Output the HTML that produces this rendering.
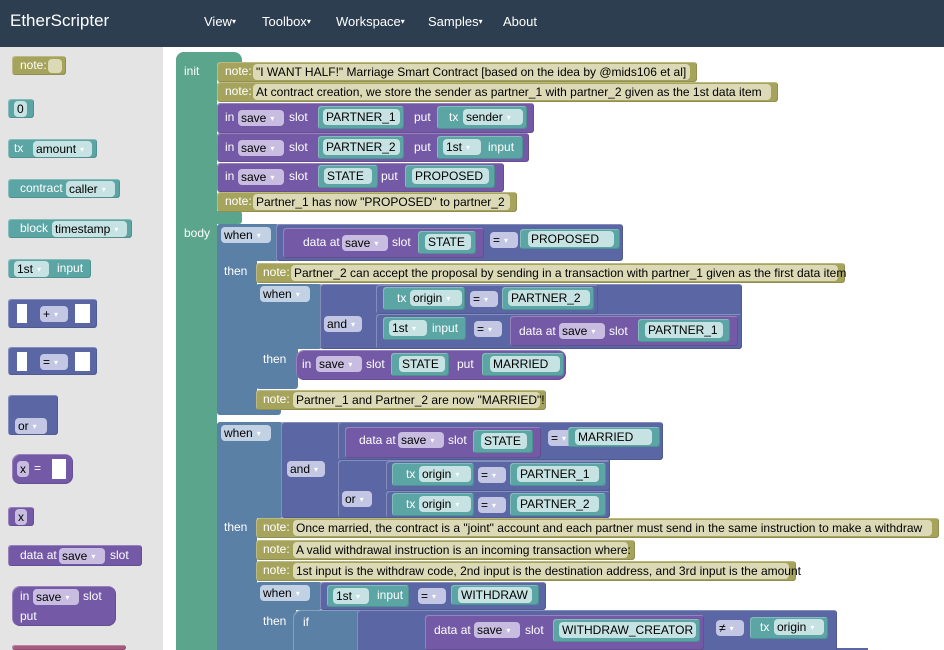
<!DOCTYPE html>
<html style="width:944px;height:650px;overflow:hidden"><head><meta charset="utf-8"><style>
*{margin:0;padding:0;box-sizing:border-box}
body{width:944px;height:650px;overflow:hidden;background:#fff;position:relative;font-family:"Liberation Sans",Arial,sans-serif}
.b{position:absolute;border-radius:3px;box-shadow:inset 1px 1px 0 rgba(255,255,255,.25),inset -1px -1px 0 rgba(0,0,0,.12)}
.t{position:absolute;color:#fff;font-size:12px;line-height:15px;white-space:nowrap}
.f{position:absolute;height:16px;line-height:16px;border-radius:4px;color:#000;font-size:12px;padding:0 3px;white-space:nowrap}
.f i{font-style:normal;font-size:8px;color:#fff;margin-left:4px;vertical-align:1px}
.o{background:#a5a35c}.of{background:#dcdab6}
.p{background:#7459a6}.pf{background:#c8bde0}
.c{background:#5ba5a5}.cf{background:#c6e2e2}
.l{background:#5b67a5}.lf{background:#c3c7e4}
.w{background:#5b80a5}.wf{background:#c3d1e4}
.g{background:#5ba58c}
.s{position:absolute;background:#fff}
.nav{position:absolute;top:14px;color:#fff;font-size:13px}
.nav i{font-style:normal;font-size:8px;vertical-align:2px}
</style></head><body>
<div style="position:absolute;left:0;top:0;width:944px;height:47px;background:#2c3e50"></div>
<div style="position:absolute;left:10px;top:11px;color:#fff;font-size:17px">EtherScripter</div>
<div class="nav" style="left:204px">View<i>▾</i></div>
<div class="nav" style="left:262px">Toolbox<i>▾</i></div>
<div class="nav" style="left:336px">Workspace<i>▾</i></div>
<div class="nav" style="left:428px">Samples<i>▾</i></div>
<div class="nav" style="left:503px">About</div>
<div style="position:absolute;left:0;top:47px;width:163px;height:603px;background:#e4e4e4"></div>

<!-- toolbox -->
<div class="b o" style="left:12px;top:56px;width:54px;height:19px"></div><div class="t" style="left:20px;top:58px">note:</div><div class="f of" style="left:48px;top:59px;width:14px;height:14px"></div>
<div class="b c" style="left:8px;top:99px;width:26px;height:19px"></div><div class="f cf" style="left:14px;top:101px">0</div>
<div class="b c" style="left:8px;top:139px;width:89px;height:19px"></div><div class="t" style="left:14px;top:141px">tx</div><div class="f cf" style="left:33px;top:141px;width:59px">amount<i>▾</i></div>
<div class="b c" style="left:8px;top:179px;width:112px;height:19px"></div><div class="t" style="left:20px;top:181px">contract</div><div class="f cf" style="left:66px;top:181px;width:49px">caller<i>▾</i></div>
<div class="b c" style="left:8px;top:219px;width:124px;height:19px"></div><div class="t" style="left:20px;top:221px">block</div><div class="f cf" style="left:52px;top:221px;width:75px">timestamp<i>▾</i></div>
<div class="b c" style="left:8px;top:259px;width:83px;height:19px"></div><div class="f cf" style="left:14px;top:261px;width:35px">1st<i>▾</i></div><div class="t" style="left:57px;top:261px">input</div>
<div class="b l" style="left:8px;top:299px;width:89px;height:29px"></div><div class="s" style="left:17px;top:304px;width:10px;height:19px"></div><div class="s" style="left:75px;top:304px;width:15px;height:19px"></div><div class="f lf" style="left:40px;top:306px;width:28px">+<i>▾</i></div>
<div class="b l" style="left:8px;top:347px;width:89px;height:28px"></div><div class="s" style="left:17px;top:352px;width:10px;height:19px"></div><div class="s" style="left:75px;top:352px;width:15px;height:19px"></div><div class="f lf" style="left:40px;top:354px;width:28px">=<i>▾</i></div>
<div class="b l" style="left:8px;top:395px;width:50px;height:40px"></div><div class="f lf" style="left:15px;top:418px;width:32px">or<i>▾</i></div>
<div class="b p" style="left:12px;top:454px;width:61px;height:30px;border-radius:8px"></div><div class="f pf" style="left:17px;top:461px">x</div><div class="t" style="left:34px;top:461px">=</div><div class="s" style="left:52px;top:459px;width:14px;height:20px"></div>
<div class="b p" style="left:8px;top:507px;width:26px;height:19px"></div><div class="f pf" style="left:15px;top:509px">x</div>
<div class="b p" style="left:8px;top:545px;width:134px;height:21px"></div><div class="t" style="left:20px;top:548px">data at</div><div class="f pf" style="left:59px;top:548px;width:46px">save<i>▾</i></div><div class="t" style="left:110px;top:548px">slot</div>
<div class="b p" style="left:12px;top:586px;width:104px;height:40px;border-radius:8px"></div><div class="t" style="left:20px;top:589px">in</div><div class="f pf" style="left:33px;top:589px;width:46px">save<i>▾</i></div><div class="t" style="left:83px;top:589px">slot</div><div class="t" style="left:20px;top:609px">put</div>
<div class="b" style="left:12px;top:645px;width:114px;height:5px;background:#a55b80"></div>

<!-- workspace teal -->
<div class="b g" style="left:176px;top:52px;width:66px;height:12px;border-radius:8px 8px 0 0;box-shadow:none"></div>
<div class="b g" style="left:176px;top:52px;width:41px;height:598px;border-radius:8px 0 0 0;box-shadow:none"></div>
<div class="b g" style="left:176px;top:211px;width:66px;height:13px;box-shadow:none"></div>
<div class="t" style="left:184px;top:64px">init</div>
<div class="t" style="left:184px;top:226px">body</div>

<!-- init -->
<div class="b o" style="left:217px;top:62px;width:480px;height:20px"></div><div class="t" style="left:225px;top:64px">note:</div><div class="f of" style="left:253px;top:64px;width:437px">"I WANT HALF!" Marriage Smart Contract [based on the idea by @mids106 et al]</div>
<div class="b o" style="left:217px;top:82px;width:561px;height:20px"></div><div class="t" style="left:225px;top:84px">note:</div><div class="f of" style="left:253px;top:84px;width:518px">At contract creation, we store the sender as partner_1 with partner_2 given as the 1st data item</div>

<div class="b p" style="left:217px;top:103px;width:317px;height:30px"></div><div class="t" style="left:225px;top:110px">in</div><div class="f pf" style="left:238px;top:110px;width:46px">save<i>▾</i></div><div class="t" style="left:289px;top:110px">slot</div>
<div class="b c" style="left:318px;top:106px;width:86px;height:23px"></div><div class="f cf" style="left:323px;top:109px;width:77px">PARTNER_1</div><div class="t" style="left:414px;top:110px">put</div>
<div class="b c" style="left:437px;top:106px;width:90px;height:23px"></div><div class="t" style="left:449px;top:110px">tx</div><div class="f cf" style="left:463px;top:109px;width:60px">sender<i>▾</i></div>

<div class="b p" style="left:217px;top:133px;width:312px;height:29px"></div><div class="t" style="left:225px;top:140px">in</div><div class="f pf" style="left:238px;top:140px;width:46px">save<i>▾</i></div><div class="t" style="left:289px;top:140px">slot</div>
<div class="b c" style="left:318px;top:136px;width:86px;height:23px"></div><div class="f cf" style="left:323px;top:139px;width:77px">PARTNER_2</div><div class="t" style="left:414px;top:140px">put</div>
<div class="b c" style="left:437px;top:136px;width:86px;height:23px"></div><div class="f cf" style="left:443px;top:139px;width:38px">1st<i>▾</i></div><div class="t" style="left:488px;top:140px">input</div>

<div class="b p" style="left:217px;top:163px;width:287px;height:29px"></div><div class="t" style="left:225px;top:169px">in</div><div class="f pf" style="left:238px;top:169px;width:46px">save<i>▾</i></div><div class="t" style="left:289px;top:169px">slot</div>
<div class="b c" style="left:318px;top:165px;width:60px;height:23px"></div><div class="f cf" style="left:324px;top:168px;width:48px">STATE</div><div class="t" style="left:381px;top:169px">put</div>
<div class="b c" style="left:405px;top:165px;width:90px;height:23px"></div><div class="f cf" style="left:412px;top:168px;width:77px">PROPOSED</div>

<div class="b o" style="left:217px;top:192px;width:300px;height:20px"></div><div class="t" style="left:225px;top:194px">note:</div><div class="f of" style="left:253px;top:194px;width:257px">Partner_1 has now "PROPOSED" to partner_2</div>

<!-- body when 1 -->
<div class="b w" style="left:217px;top:224px;width:40px;height:191px;box-shadow:none"></div>
<div class="b w" style="left:217px;top:224px;width:62px;height:37px;box-shadow:none"></div>
<div class="b w" style="left:217px;top:404px;width:64px;height:11px;box-shadow:none"></div>
<div class="f wf" style="left:221px;top:227px;width:50px">when<i>▾</i></div>
<div class="b l" style="left:276px;top:224px;width:347px;height:37px"></div>
<div class="b p" style="left:283px;top:228px;width:201px;height:30px"></div><div class="t" style="left:303px;top:235px">data at</div><div class="f pf" style="left:342px;top:235px;width:46px">save<i>▾</i></div><div class="t" style="left:392px;top:235px">slot</div>
<div class="b c" style="left:418px;top:231px;width:58px;height:23px"></div><div class="f cf" style="left:425px;top:234px;width:46px">STATE</div>
<div class="f lf" style="left:490px;top:232px;width:28px">=<i>▾</i></div>
<div class="b c" style="left:520px;top:229px;width:100px;height:20px"></div><div class="f cf" style="left:528px;top:231px;width:86px">PROPOSED</div>
<div class="t" style="left:224px;top:264px">then</div>
<div class="b o" style="left:256px;top:263px;width:589px;height:20px"></div><div class="t" style="left:263px;top:265px">note:</div><div class="f of" style="left:291px;top:265px;width:547px"> Partner_2 can accept the proposal by sending in a transaction with partner_1 given as the first data item</div>

<div class="b w" style="left:256px;top:284px;width:42px;height:105px;box-shadow:none"></div>
<div class="b w" style="left:256px;top:284px;width:66px;height:65px;box-shadow:none"></div>
<div class="f wf" style="left:260px;top:286px;width:50px">when<i>▾</i></div>
<div class="b l" style="left:320px;top:284px;width:422px;height:65px"></div>
<div class="f lf" style="left:324px;top:316px;width:38px">and<i>▾</i></div>
<div class="b l" style="left:376px;top:285px;width:222px;height:29px"></div>
<div class="b c" style="left:383px;top:287px;width:82px;height:23px"></div><div class="t" style="left:397px;top:291px">tx</div><div class="f cf" style="left:410px;top:290px;width:52px">origin<i>▾</i></div>
<div class="f lf" style="left:470px;top:291px;width:28px">=<i>▾</i></div>
<div class="b c" style="left:502px;top:287px;width:92px;height:23px"></div><div class="f cf" style="left:508px;top:290px;width:82px">PARTNER_2</div>
<div class="b l" style="left:376px;top:314px;width:366px;height:35px"></div>
<div class="b c" style="left:383px;top:317px;width:83px;height:23px"></div><div class="f cf" style="left:389px;top:320px;width:38px">1st<i>▾</i></div><div class="t" style="left:432px;top:321px">input</div>
<div class="f lf" style="left:474px;top:321px;width:28px">=<i>▾</i></div>
<div class="b p" style="left:510px;top:316px;width:228px;height:30px"></div><div class="t" style="left:519px;top:324px">data at</div><div class="f pf" style="left:559px;top:323px;width:46px">save<i>▾</i></div><div class="t" style="left:609px;top:324px">slot</div>
<div class="b c" style="left:638px;top:319px;width:92px;height:23px"></div><div class="f cf" style="left:645px;top:322px;width:78px">PARTNER_1</div>
<div class="t" style="left:263px;top:352px">then</div>
<div class="b p" style="left:296px;top:350px;width:270px;height:30px;border-radius:8px"></div><div class="t" style="left:302px;top:357px">in</div><div class="f pf" style="left:316px;top:356px;width:46px">save<i>▾</i></div><div class="t" style="left:366px;top:357px">slot</div>
<div class="b c" style="left:391px;top:353px;width:58px;height:23px"></div><div class="f cf" style="left:399px;top:356px;width:46px">STATE</div><div class="t" style="left:457px;top:357px">put</div>
<div class="b c" style="left:482px;top:353px;width:82px;height:23px"></div><div class="f cf" style="left:490px;top:356px;width:70px">MARRIED</div>
<div class="b o" style="left:256px;top:390px;width:290px;height:20px"></div><div class="t" style="left:263px;top:392px">note:</div><div class="f of" style="left:293px;top:392px;width:247px">Partner_1 and Partner_2 are now "MARRIED"!</div>

<!-- body when 2 -->
<div class="b w" style="left:217px;top:422px;width:40px;height:240px;box-shadow:none"></div>
<div class="b w" style="left:217px;top:422px;width:66px;height:96px;box-shadow:none"></div>
<div class="f wf" style="left:221px;top:425px;width:50px">when<i>▾</i></div>
<div class="b l" style="left:281px;top:422px;width:329px;height:96px"></div>
<div class="b l" style="left:338px;top:422px;width:325px;height:38px"></div>
<div class="b p" style="left:345px;top:427px;width:196px;height:31px"></div><div class="t" style="left:359px;top:433px">data at</div><div class="f pf" style="left:398px;top:432px;width:46px">save<i>▾</i></div><div class="t" style="left:448px;top:433px">slot</div>
<div class="b c" style="left:473px;top:430px;width:60px;height:23px"></div><div class="f cf" style="left:481px;top:433px;width:46px">STATE</div>
<div class="f lf" style="left:548px;top:430px;width:28px">=<i>▾</i></div>
<div class="b c" style="left:568px;top:427px;width:92px;height:20px"></div><div class="f cf" style="left:575px;top:429px;width:77px">MARRIED</div>
<div class="f lf" style="left:287px;top:461px;width:38px">and<i>▾</i></div>
<div class="b l" style="left:338px;top:460px;width:272px;height:58px"></div>
<div class="f lf" style="left:342px;top:491px;width:30px">or<i>▾</i></div>
<div class="b l" style="left:386px;top:461px;width:224px;height:30px"></div>
<div class="b l" style="left:386px;top:491px;width:224px;height:27px"></div>
<div class="b c" style="left:392px;top:463px;width:82px;height:23px"></div><div class="t" style="left:406px;top:467px">tx</div><div class="f cf" style="left:419px;top:466px;width:52px">origin<i>▾</i></div>
<div class="f lf" style="left:478px;top:467px;width:28px">=<i>▾</i></div>
<div class="b c" style="left:510px;top:463px;width:96px;height:23px"></div><div class="f cf" style="left:517px;top:466px;width:82px">PARTNER_1</div>
<div class="b c" style="left:392px;top:493px;width:82px;height:23px"></div><div class="t" style="left:406px;top:497px">tx</div><div class="f cf" style="left:419px;top:496px;width:52px">origin<i>▾</i></div>
<div class="f lf" style="left:478px;top:497px;width:28px">=<i>▾</i></div>
<div class="b c" style="left:510px;top:493px;width:96px;height:23px"></div><div class="f cf" style="left:517px;top:496px;width:82px">PARTNER_2</div>
<div class="t" style="left:224px;top:520px">then</div>
<div class="b o" style="left:256px;top:518px;width:683px;height:20px"></div><div class="t" style="left:263px;top:520px">note:</div><div class="f of" style="left:293px;top:520px;width:639px">Once married, the contract is a "joint" account and each partner must send in the same instruction to make a withdraw</div>
<div class="b o" style="left:256px;top:540px;width:379px;height:20px"></div><div class="t" style="left:263px;top:542px">note:</div><div class="f of" style="left:293px;top:542px;width:335px">A valid withdrawal instruction is an incoming transaction where:</div>
<div class="b o" style="left:256px;top:561px;width:540px;height:20px"></div><div class="t" style="left:263px;top:563px">note:</div><div class="f of" style="left:293px;top:563px;width:496px">1st input is the withdraw code, 2nd input is the destination address, and 3rd input is the amount</div>

<div class="b w" style="left:256px;top:582px;width:40px;height:80px;box-shadow:none"></div>
<div class="b w" style="left:256px;top:582px;width:66px;height:28px;box-shadow:none"></div>
<div class="f wf" style="left:260px;top:585px;width:50px">when<i>▾</i></div>
<div class="b l" style="left:320px;top:582px;width:226px;height:28px"></div>
<div class="b c" style="left:327px;top:585px;width:82px;height:22px"></div><div class="f cf" style="left:333px;top:588px;width:36px">1st<i>▾</i></div><div class="t" style="left:377px;top:588px">input</div>
<div class="f lf" style="left:418px;top:588px;width:28px">=<i>▾</i></div>
<div class="b c" style="left:451px;top:585px;width:88px;height:20px"></div><div class="f cf" style="left:458px;top:587px;width:74px">WITHDRAW</div>
<div class="t" style="left:263px;top:614px">then</div>
<div class="b w" style="left:293px;top:610px;width:66px;height:50px;border-radius:8px 0 0 0"></div><div class="t" style="left:303px;top:615px">if</div>
<div class="b l" style="left:357px;top:610px;width:480px;height:50px"></div>
<div style="position:absolute;left:837px;top:648px;width:31px;height:2px;background:#5b67a5"></div>
<div class="b p" style="left:425px;top:615px;width:279px;height:35px"></div><div class="t" style="left:434px;top:623px">data at</div><div class="f pf" style="left:474px;top:622px;width:46px">save<i>▾</i></div><div class="t" style="left:525px;top:623px">slot</div>
<div class="b c" style="left:553px;top:619px;width:147px;height:23px"></div><div class="f cf" style="left:559px;top:622px;width:137px">WITHDRAW_CREATOR</div>
<div class="f lf" style="left:716px;top:620px;width:28px">≠<i>▾</i></div>
<div class="b c" style="left:750px;top:617px;width:78px;height:22px"></div><div class="t" style="left:760px;top:620px">tx</div><div class="f cf" style="left:774px;top:619px;width:50px">origin<i>▾</i></div>
</body></html>
